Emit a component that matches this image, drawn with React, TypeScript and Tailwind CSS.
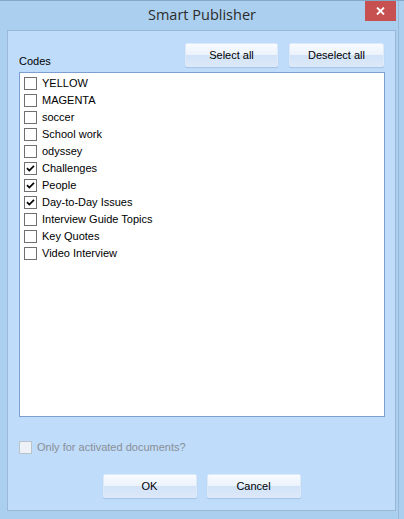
import { useState } from 'react';

const initialCodes = [
  { name: 'YELLOW', checked: false },
  { name: 'MAGENTA', checked: false },
  { name: 'soccer', checked: false },
  { name: 'School work', checked: false },
  { name: 'odyssey', checked: false },
  { name: 'Challenges', checked: true },
  { name: 'People', checked: true },
  { name: 'Day-to-Day Issues', checked: true },
  { name: 'Interview Guide Topics', checked: false },
  { name: 'Key Quotes', checked: false },
  { name: 'Video Interview', checked: false },
];

const btn =
  'h-[24px] border border-[#dfeaf8] rounded-[2px] shadow-[0_1px_1px_#a3c2e6] bg-[linear-gradient(to_bottom,#f8fbff_0%,#ecf3fc_48%,#d2e3f8_52%,#dce8f9_100%)] text-[11px] text-black flex items-center justify-center';

function CheckBox({ checked, disabled }: { checked: boolean; disabled?: boolean }) {
  return (
    <span
      className={`w-[13px] h-[13px] shrink-0 border flex items-center justify-center ${
        disabled ? 'border-[#b9c3cc] bg-[#eef2f6]' : 'border-[#707070] bg-white'
      }`}
    >
      {checked && (
        <svg width="9" height="9" viewBox="0 0 9 9">
          <path d="M1 4.2 L3.3 6.6 L8 1.8" fill="none" stroke="#000" strokeWidth="1.7" />
        </svg>
      )}
    </span>
  );
}

export default function App() {
  const [codes, setCodes] = useState(initialCodes);

  const setAll = (value: boolean) => setCodes(codes.map(c => ({ ...c, checked: value })));

  return (
    <div
      className="relative w-[404px] h-[519px] bg-[#abd0ef] border-t border-[#86a8c8] overflow-hidden"
      style={{ fontFamily: '"Liberation Sans", Arial, sans-serif' }}
    >
      {/* Title bar */}
      <div className="h-[29px] flex items-center justify-center">
        <span
          className="text-[14.5px] text-[#2b2b2b] -mt-[1px]"
          style={{ fontFamily: '"Open Sans", "Noto Sans", sans-serif' }}
        >
          Smart Publisher
        </span>
      </div>
      <button className="absolute top-0 right-[8px] w-[31px] h-[20px] bg-[#c75050] flex items-center justify-center">
        <svg width="9" height="8" viewBox="0 0 9 8">
          <path d="M1 0.5 L8 7.5 M8 0.5 L1 7.5" stroke="#fff" strokeWidth="1.8" />
        </svg>
      </button>
      <div className="absolute top-0 right-[5px] w-px h-full bg-[#98b8d6]" />

      {/* Client area */}
      <div className="ml-[7px] w-[389px] h-[481px] border border-[#9bb9d6] bg-[#bfdcfa] flex flex-col pt-[12px] pl-[11px] pr-[10px]">
        <div className="h-[29px] flex justify-between items-start pr-[1px]">
          <span className="mt-[12px] text-[11px] leading-[13px] text-black">Codes</span>
          <div className="flex gap-[11px]">
            <button onClick={() => setAll(true)} className={`${btn} w-[93px]`}>
              Select all
            </button>
            <button onClick={() => setAll(false)} className={`${btn} w-[95px]`}>
              Deselect all
            </button>
          </div>
        </div>

        <div className="h-[345px] border border-[#7c9fcf] bg-white pt-[2px] pl-[4px]">
          {codes.map((c, i) => (
            <div
              key={c.name}
              className="h-[17px] flex items-center gap-[5px] cursor-default"
              onClick={() => setCodes(codes.map((x, j) => (j === i ? { ...x, checked: !x.checked } : x)))}
            >
              <CheckBox checked={c.checked} />
              <span className="text-[11px] text-black leading-none">{c.name}</span>
            </div>
          ))}
        </div>

        <div className="mt-[24px] h-[13px] flex items-center gap-[5px]">
          <CheckBox checked={false} disabled />
          <span className="text-[11px] text-[#8a8f96] leading-none">Only for activated documents?</span>
        </div>

        <div className="mt-[20px] flex justify-center gap-[10px] pr-[1px]">
          <button className={`${btn} w-[94px]`}>OK</button>
          <button className={`${btn} w-[94px]`}>Cancel</button>
        </div>
      </div>
    </div>
  );
}
